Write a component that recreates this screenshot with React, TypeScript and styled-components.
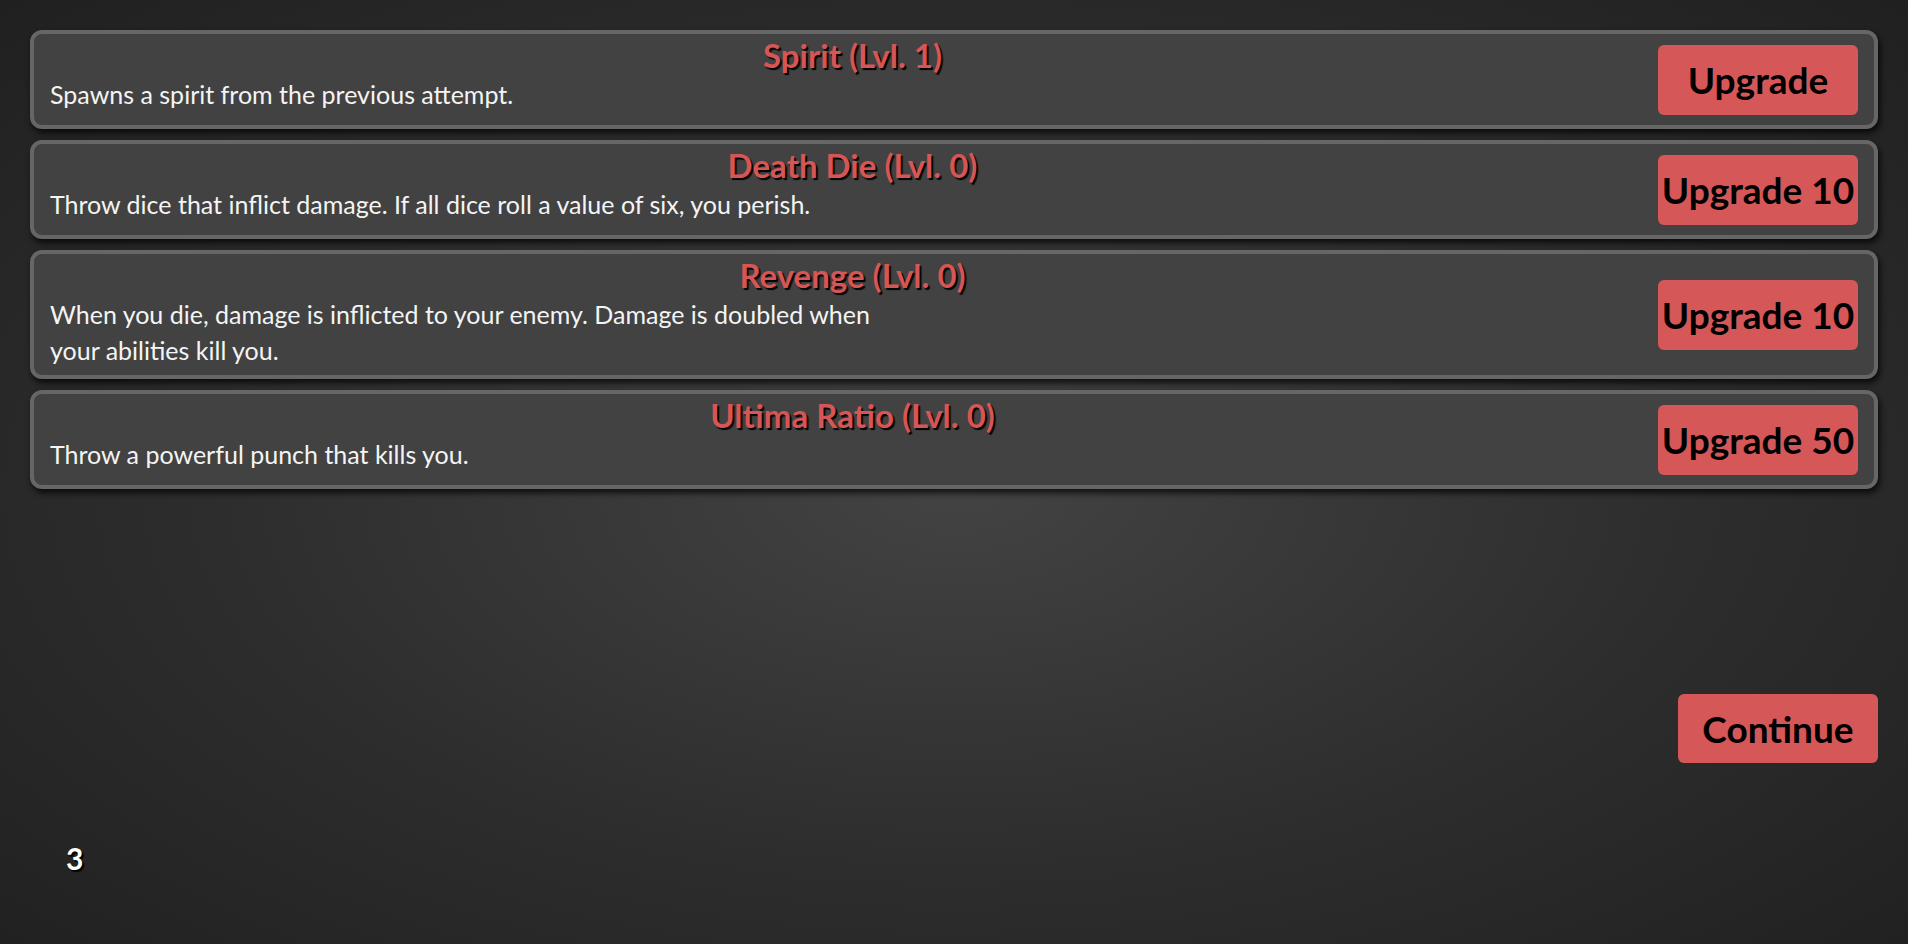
import styled, { createGlobalStyle } from 'styled-components'

const GlobalStyle = createGlobalStyle`
  html, body {
    margin: 0;
    height: 100%;
  }
  body {
    background: radial-gradient(ellipse at 50% 52%, #434343 0%, #2d2d2d 55%, #202020 100%);
    font-family: Lato, 'Open Sans', sans-serif;
    color: #f4f4f4;
  }
`

const Page = styled.div`
  min-height: 100vh;
  box-sizing: border-box;
  padding: 30px;
  display: flex;
  flex-direction: column;
`

const List = styled.div`
  display: flex;
  flex-direction: column;
  gap: 11px;
`

const Card = styled.div`
  display: flex;
  align-items: center;
  gap: 3px;
  min-height: 99px;
  box-sizing: border-box;
  padding: 4px 16px;
  background: #424242;
  border: 4px solid #666666;
  border-radius: 12px;
  box-shadow: 2px 4px 6px rgba(0, 0, 0, 0.75);
`

const Info = styled.div`
  flex: 1;
  align-self: flex-start;
  margin: -3px 0 3px;
`

const Title = styled.h2`
  margin: 0;
  text-align: center;
  font-size: 33px;
  line-height: 40px;
  font-weight: 700;
  color: #d65656;
  text-shadow: 2px 2px 1px #000;
`

const Desc = styled.p`
  margin: 1px 0 0;
  font-size: 25px;
  line-height: 36px;
  max-width: 850px;
`

const Button = styled.button<{ $h?: number }>`
  flex: none;
  width: 200px;
  height: ${p => p.$h ?? 70}px;
  padding: 0;
  border: none;
  border-radius: 6px;
  background: #d65757;
  color: #000;
  font-family: Lato, 'Open Sans', sans-serif;
  font-size: 37px;
  font-weight: 700;
  cursor: pointer;
  white-space: nowrap;
`

const Footer = styled.div`
  display: flex;
  justify-content: flex-end;
  margin-top: 205px;
`

const Counter = styled.div`
  margin: 78px 0 0 36px;
  font-size: 30px;
  line-height: 34px;
  font-weight: 700;
  color: #fff;
  text-shadow: 2px 2px 1px #000;
`

const abilities = [
  { name: 'Spirit', level: 1, text: 'Spawns a spirit from the previous attempt.', cost: '' },
  { name: 'Death Die', level: 0, text: 'Throw dice that inflict damage. If all dice roll a value of six, you perish.', cost: ' 10' },
  { name: 'Revenge', level: 0, text: 'When you die, damage is inflicted to your enemy. Damage is doubled when your abilities kill you.', cost: ' 10' },
  { name: 'Ultima Ratio', level: 0, text: 'Throw a powerful punch that kills you.', cost: ' 50' },
]

export default function App() {
  return (
    <>
      <GlobalStyle />
      <Page>
        <List>
          {abilities.map(a => (
            <Card key={a.name}>
              <Info>
                <Title>{a.name} (Lvl. {a.level})</Title>
                <Desc>{a.text}</Desc>
              </Info>
              <Button>Upgrade{a.cost}</Button>
            </Card>
          ))}
        </List>
        <Footer>
          <Button $h={69}>Continue</Button>
        </Footer>
        <Counter>3</Counter>
      </Page>
    </>
  )
}
